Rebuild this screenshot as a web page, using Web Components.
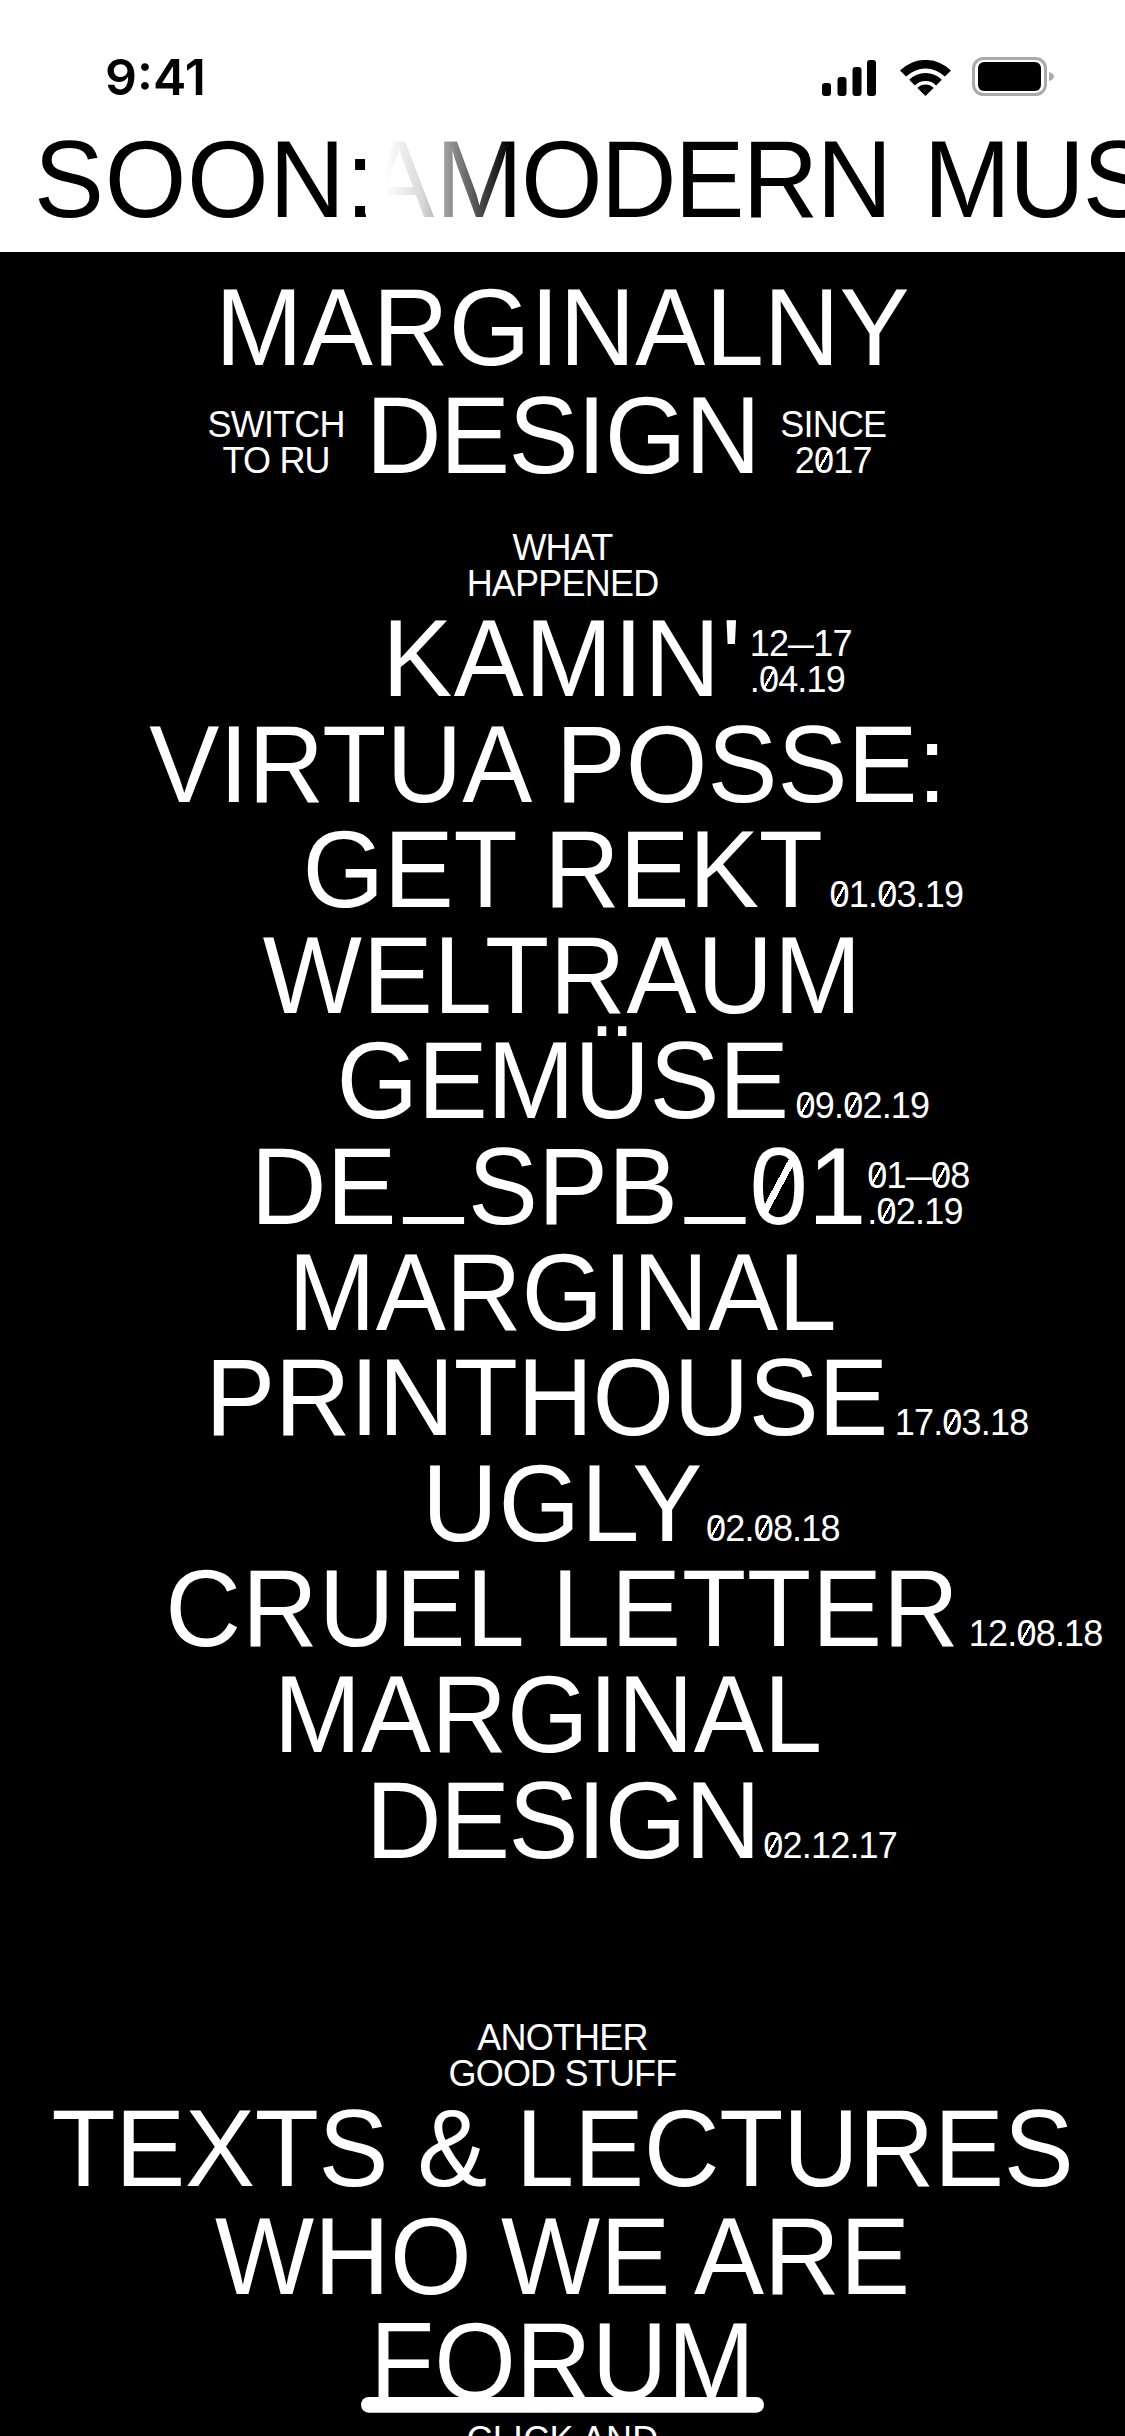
<!DOCTYPE html>
<html lang="en">
<head>
<meta charset="utf-8">
<title>Marginalny Design</title>
<style>
  html, body { margin: 0; height: 2436px; overflow: hidden; background: #000; }
  body { font-family: "Liberation Sans", Arial, sans-serif; }
  main { display: block; }
  /* bits of light DOM that sit inside the slots */
  .dash { display: inline-block; transform: scaleX(.72); margin: 0 -5px; }
  .rise { display: inline-block; transform: translateY(-21px); margin: 0 5px 0 8px; }
</style>
</head>
<body>
<template id="status-bar-tpl">
  <style>
    :host { display: flex; height: 128px; padding: 0 71px 0 105px; align-items: flex-end; justify-content: space-between; background: #fff; color: #000; box-sizing: border-box; }
    .time { font: 600 50px/1 Inter, "Liberation Sans", sans-serif; padding-bottom: 26px; }
    .icons { display: flex; align-items: flex-end; padding-bottom: 32px; }
    .signal { margin-right: 24px; }
    .wifi { margin-right: 21px; }
    svg { display: block; }
  </style>
  <span class="time">9:41</span>
  <div class="icons">
    <svg class="signal" width="54" height="36" viewBox="0 0 54 36"><rect x="0" y="23" width="9" height="13" rx="3"/><rect x="15.5" y="17" width="9" height="19" rx="3"/><rect x="30.5" y="7" width="9" height="29" rx="3"/><rect x="45" y="0" width="9" height="36" rx="3"/></svg>
    <svg class="wifi" width="51" height="36" viewBox="0 0 51 36"><path d="M0 10.5A36 36 0 0 1 51 10.5L44.9 16.6A27.5 27.5 0 0 0 6.1 16.6Z"/><path d="M9.2 19.7A23 23 0 0 1 41.8 19.7L36.1 25.4A15 15 0 0 0 14.9 25.4Z"/><path d="M17.4 27.9A11.5 11.5 0 0 1 33.6 27.9L25.5 36Z"/></svg>
    <svg width="82" height="39" viewBox="0 0 82 39"><rect x="1.5" y="1.5" width="72" height="36" rx="10" fill="none" stroke="#aaa" stroke-width="3"/><rect x="6" y="5" width="63" height="29" rx="6"/><path d="M77 15 C80 16 82 17.500 82 19.500 C82 21.500 80 23 77 24 Z" fill="#aaa"/></svg>
  </div>
</template>

<template id="news-ticker-tpl">
  <style>
    :host { display: block; height: 124px; overflow: hidden; background: #fff; color: #000; position: relative; font-size: 105px; line-height: 105px; letter-spacing: .6px; }
    .text { padding-left: 34px; white-space: pre; transform: scaleY(1.05); transform-origin: 0 89px; }
    .fade { position: absolute; top: 0; bottom: 0; left: 366px; width: 144px; background: linear-gradient(to right, #fff 13%, rgba(255,255,255,.85) 39%, rgba(255,255,255,0)); }
  </style>
  <div class="text"><slot></slot></div>
  <div class="fade"></div>
</template>

<template id="site-head-tpl">
  <style>
    :host { display: block; color: #fff; text-align: center; padding-top: 24px; }
    .big { font-size: 105px; line-height: 105px; transform: scaleY(1.05); transform-origin: 0 89px; }
    .row { display: grid; grid-template-columns: 1fr auto 1fr; margin-top: 3px; column-gap: 21px; }
    .design { letter-spacing: -1.5px; }
    .side { font-size: 36px; line-height: 36px; letter-spacing: -.8px; align-self: end; padding-bottom: 10px; }
    .left { justify-self: end; }
    .right { justify-self: start; }
  </style>
  <div class="big">MARGINALNY</div>
  <div class="row">
    <div class="side left">SWITCH<br>TO RU</div>
    <div class="big design">DESIGN</div>
    <div class="side right">SINCE<br>2<slash-zero>0</slash-zero>17</div>
  </div>
</template>

<template id="section-label-tpl">
  <style>
    :host { display: block; color: #fff; text-align: center; font-size: 36px; line-height: 36px; letter-spacing: -.8px; }
  </style>
  <slot></slot>
</template>

<template id="event-row-tpl">
  <style>
    :host { display: grid; grid-template-columns: 1fr auto 1fr; color: #fff; font-size: 105px; line-height: 105.6px; }
    .title { grid-column: 2; white-space: pre; margin-left: var(--nudge, 0); align-self: last baseline; transform: scaleY(1.05); transform-origin: 0 89px; }
    .date { font-size: 36px; line-height: 36px; letter-spacing: -.8px; grid-column: 3; align-self: last baseline; padding-left: 7px; white-space: nowrap; }
  </style>
  <div class="title"><slot></slot></div>
  <div class="date"><slot name="date"></slot></div>
</template>

<template id="slash-zero-tpl">
  <style>
    :host { display: inline-block; white-space: normal; background: linear-gradient(to bottom right, transparent 44%, currentColor 44%, currentColor 56%, transparent 56%) center / .31em .55em no-repeat; }
  </style>
  <slot></slot>
</template>

<template id="under-link-tpl">
  <style>
    :host { display: flex; flex-direction: column; white-space: normal; }
    .bar { height: 15px; background: #fff; border-radius: 8px; margin: -19px -9px 0; }
  </style>
  <slot></slot>
  <div class="bar"></div>
</template>

<status-bar></status-bar>
<news-ticker>SOON:<span style="word-spacing:-29px"> </span><span style="margin-left:-12px">A</span><span style="word-spacing:-29px"> </span><span style="letter-spacing:-2px;word-spacing:6px">MODERN MUSEUM</span></news-ticker>

<main>
  <site-head></site-head>
  <section-label style="margin-top:41px">WHAT<br>HAPPENED</section-label>
  <div style="margin-top:5px">
    <event-row style="letter-spacing:1.3px">KAMIN'<span slot="date" style="display:block;transform:translateY(-4px)">12<span class="dash">—</span>17<br>.<slash-zero>0</slash-zero>4.19</span></event-row>
    <event-row>VIRTUA POSSE: </event-row>
    <event-row style="letter-spacing:-.4px">GET REKT<span slot="date"><slash-zero>0</slash-zero>1.<slash-zero>0</slash-zero>3.19</span></event-row>
    <event-row style="letter-spacing:.8px">WELTRAUM</event-row>
    <event-row style="letter-spacing:-.5px">GEMÜSE<span slot="date"><slash-zero>0</slash-zero>9.<slash-zero>0</slash-zero>2.19</span></event-row>
    <event-row style="--nudge:-8px">DE<span class="rise">_</span>SPB<span class="rise">_</span><slash-zero>0</slash-zero>1<span slot="date" style="display:block;margin-left:-6px"><slash-zero>0</slash-zero>1<span class="dash">—</span><slash-zero>0</slash-zero>8<br>.<slash-zero>0</slash-zero>2.19</span></event-row>
    <event-row>MARGINAL</event-row>
    <event-row style="letter-spacing:-.6px;--nudge:-32px">PRINTHOUSE<span slot="date">17.<slash-zero>0</slash-zero>3.18</span></event-row>
    <event-row style="letter-spacing:.7px">UGLY<span slot="date" style="margin-left:-4px"><slash-zero>0</slash-zero>2.<slash-zero>0</slash-zero>8.18</span></event-row>
    <event-row style="letter-spacing:.9px">CRUEL LETTER<span slot="date" style="margin-left:2px">12.<slash-zero>0</slash-zero>8.18</span></event-row>
    <event-row style="--nudge:-4px">MARGINAL </event-row>
    <event-row style="letter-spacing:-1.5px">DESIGN<span slot="date" style="margin-left:-3px"><slash-zero>0</slash-zero>2.12.17</span></event-row>
  </div>
  <section-label style="margin-top:146px">ANOTHER<br>GOOD STUFF</section-label>
  <div style="margin-top:5px">
    <event-row style="letter-spacing:-.3px">TEXTS &amp; LECTURES</event-row>
    <event-row style="margin-top:2px;letter-spacing:.1px">WHO WE ARE</event-row>
    <event-row><under-link>FORUM</under-link></event-row>
  </div>
  <section-label style="margin-top:10px;letter-spacing:.2px">CLICK AND</section-label>
</main>

<script>
  // every element just clones its template into an open shadow root
  function register(tag) {
    const tpl = document.getElementById(tag + '-tpl');
    customElements.define(tag, class extends HTMLElement {
      constructor() {
        super();
        this.attachShadow({ mode: 'open' }).appendChild(tpl.content.cloneNode(true));
      }
    });
  }
  ['slash-zero', 'status-bar', 'news-ticker', 'site-head', 'section-label', 'event-row', 'under-link'].forEach(register);
</script>
</body>
</html>
